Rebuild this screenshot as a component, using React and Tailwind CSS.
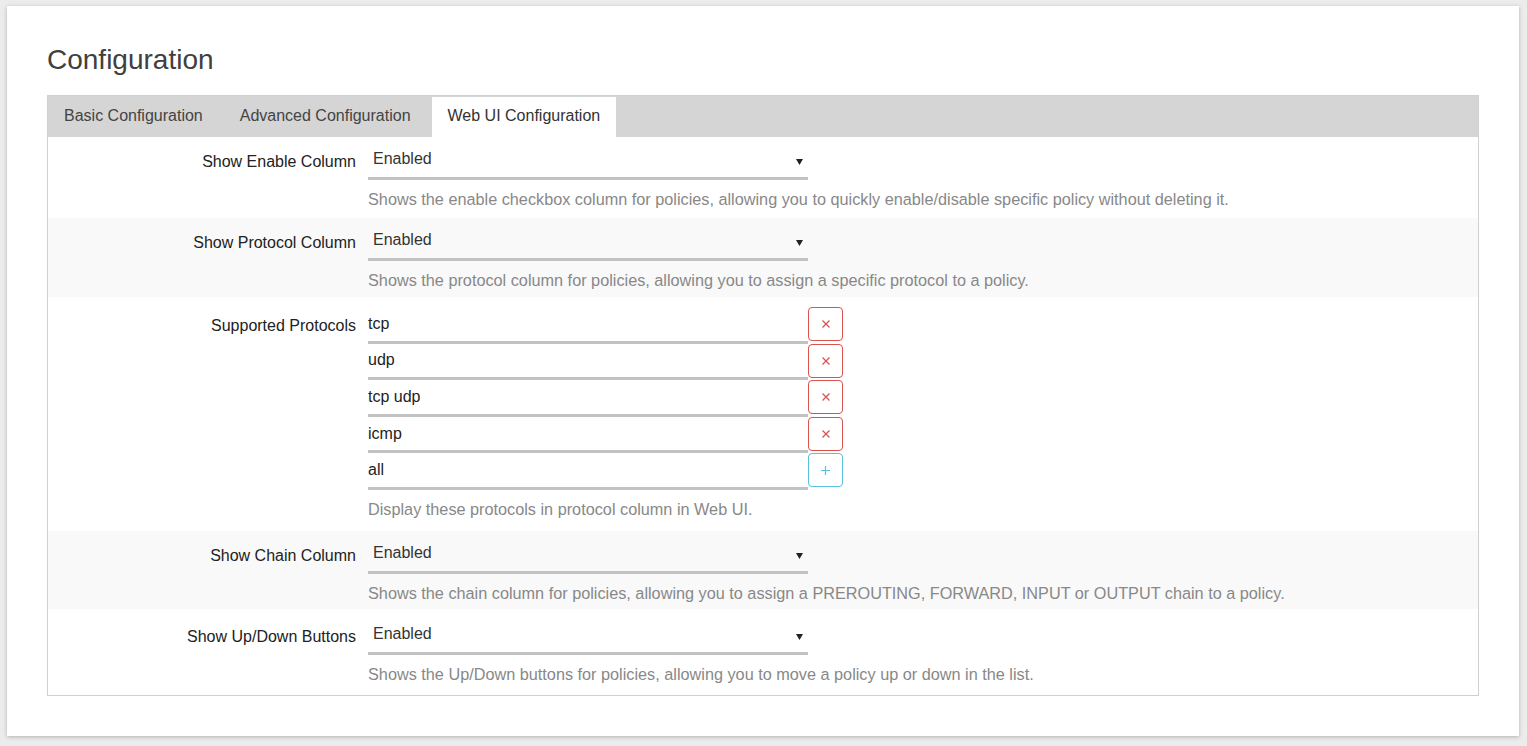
import React from "react";

const font = { fontFamily: '"Liberation Sans", Arial, sans-serif' };

const tabs = ["Basic Configuration", "Advanced Configuration", "Web UI Configuration"];

const protocols = ["tcp", "udp", "tcp udp", "icmp", "all"];

const SelectBox = ({ value }) => (
  <div className="relative w-[440px] h-[39px] border-b-[3px] border-[#c2c2c2] flex items-center pl-[5px] text-[16px] text-[#333]">
    <span className="leading-6">{value}</span>
    <svg
      className="absolute right-[5px] top-[18px]"
      width="7"
      height="6"
      viewBox="0 0 7 6"
    >
      <path d="M0 0 L7 0 L3.5 6 Z" fill="#222" />
    </svg>
  </div>
);

// pad = tailwind padding classes per row, rows are not all the same height
const SelectRow = ({ label, help, shaded, pad }) => (
  <div className={`flex ${shaded ? "bg-[#f9f9f9]" : "bg-white"} ${pad}`}>
    <div className="w-[320px] pr-3 pt-[9px] text-right text-[16px] leading-6 text-[#222]">{label}</div>
    <div className="flex flex-col">
      <SelectBox value="Enabled" />
      <p className="mt-[7px] text-[16.25px] leading-6 text-[#888]">{help}</p>
    </div>
  </div>
);

const ProtocolRow = ({ value, isLast }) => (
  <div className="flex h-[36.6px]">
    <div className="w-[440px] h-[36.6px] border-b-[3px] border-[#c2c2c2] flex items-center text-[16px] text-[#222]">
      {value}
    </div>
    <button
      type="button"
      className={`w-[35px] h-[34px] rounded-[4px] border bg-white flex items-center justify-center ${
        isLast ? "border-[#5bc0de]" : "border-[#d9534f]"
      }`}
    >
      {isLast ? (
        <svg width="9" height="9" viewBox="0 0 9 9">
          <path d="M4.5 0 V9 M0 4.5 H9" stroke="#5bc0de" strokeWidth="1.2" />
        </svg>
      ) : (
        <svg width="8" height="8" viewBox="0 0 8 8">
          <path d="M0.5 0.5 L7.5 7.5 M7.5 0.5 L0.5 7.5" stroke="#d9534f" strokeWidth="1.3" />
        </svg>
      )}
    </button>
  </div>
);

export default function App() {
  return (
    <div className="min-h-screen bg-[#ececec] pt-[6px] pl-[7px] pr-[8px] pb-[10px]" style={font}>
      <div className="bg-white shadow-[0_1px_4px_rgba(0,0,0,0.25)] px-10 pt-[37px] pb-10">
        <h1 className="text-[28px] leading-[34px] text-[#404040] mb-[18px]">Configuration</h1>

        <div className="border border-[#d0d0d0]">
          {/* tabs */}
          <div className="bg-[#d5d5d5] pt-[1px] flex gap-[5px]">
            {tabs.map((t, i) => (
              <div
                key={t}
                className={`h-[40px] px-4 pb-[2px] flex items-center text-[16px] ${
                  i === 2 ? "bg-white text-[#333]" : "text-[#444]"
                }`}
              >
                {t}
              </div>
            ))}
          </div>

          <SelectRow
            pad="pt-[4px] pb-[7px]"
            label="Show Enable Column"
            help="Shows the enable checkbox column for policies, allowing you to quickly enable/disable specific policy without deleting it."
          />
          <SelectRow
            shaded
            pad="pt-[4px] pb-[5px]"
            label="Show Protocol Column"
            help="Shows the protocol column for policies, allowing you to assign a specific protocol to a policy."
          />

          {/* supported protocols */}
          <div className="flex bg-white pt-[10px] pb-[10px]">
            <div className="w-[320px] pr-3 pt-[7px] text-right text-[16px] leading-6 text-[#222]">Supported Protocols</div>
            <div className="flex flex-col">
              {protocols.map((p, i) => (
                <ProtocolRow key={p} value={p} isLast={i === protocols.length - 1} />
              ))}
              <p className="mt-[7px] text-[16.25px] leading-6 text-[#888]">Display these protocols in protocol column in Web UI.</p>
            </div>
          </div>

          <SelectRow
            shaded
            pad="pt-[4px] pb-[4px]"
            label="Show Chain Column"
            help="Shows the chain column for policies, allowing you to assign a PREROUTING, FORWARD, INPUT or OUTPUT chain to a policy."
          />
          <SelectRow
            pad="pt-[7px] pb-[9px]"
            label="Show Up/Down Buttons"
            help="Shows the Up/Down buttons for policies, allowing you to move a policy up or down in the list."
          />
        </div>
      </div>
    </div>
  );
}
